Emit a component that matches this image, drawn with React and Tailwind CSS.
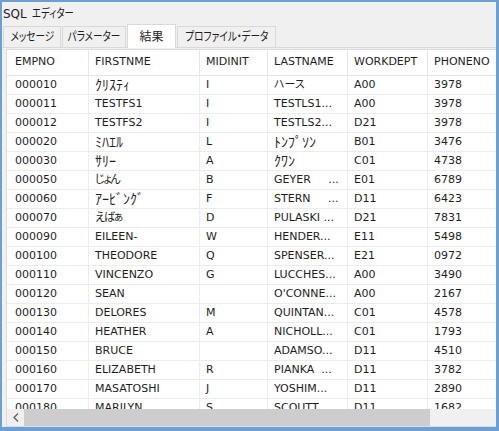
const rows = [
  ['000010', 'ｸﾘｽﾃｨ', 'I', 'ハース', 'A00', '3978'],
  ['000011', 'TESTFS1', 'I', 'TESTLS1...', 'A00', '3978'],
  ['000012', 'TESTFS2', 'I', 'TESTLS2...', 'D21', '3978'],
  ['000020', 'ﾐﾊｴﾙ', 'L', 'ﾄﾝﾌﾟｿﾝ', 'B01', '3476'],
  ['000030', 'ｻﾘｰ', 'A', 'ｸﾜﾝ', 'C01', '4738'],
  ['000050', 'じょん', 'B', 'GEYER\u00a0\u00a0\u00a0\u00a0 ...', 'E01', '6789'],
  ['000060', 'ｱｰﾋﾞﾝｸﾞ', 'F', 'STERN\u00a0\u00a0\u00a0\u00a0 ...', 'D11', '6423'],
  ['000070', 'えばぁ', 'D', 'PULASKI ...', 'D21', '7831'],
  ['000090', 'EILEEN-', 'W', 'HENDER...', 'E11', '5498'],
  ['000100', 'THEODORE', 'Q', 'SPENSER...', 'E21', '0972'],
  ['000110', 'VINCENZO', 'G', 'LUCCHES...', 'A00', '3490'],
  ['000120', 'SEAN', '', "O'CONNE...", 'A00', '2167'],
  ['000130', 'DELORES', 'M', 'QUINTAN...', 'C01', '4578'],
  ['000140', 'HEATHER', 'A', 'NICHOLL...', 'C01', '1793'],
  ['000150', 'BRUCE', '', 'ADAMSO...', 'D11', '4510'],
  ['000160', 'ELIZABETH', 'R', 'PIANKA\u00a0 ...', 'D11', '3782'],
  ['000170', 'MASATOSHI', 'J', 'YOSHIM...', 'D11', '2890'],
  ['000180', 'MARILYN', 'S', 'SCOUTT\u00a0 ...', 'D11', '1682'],
];

const headers = ['EMPNO', 'FIRSTNME', 'MIDINIT', 'LASTNAME', 'WORKDEPT', 'PHONENO'];
const cols = 'grid grid-cols-[82px_111px_68px_80px_80px_80px]';

// half-width katakana reads too small at the table size
const isKana = (s) => /[\uff61-\uff9f]/.test(s);
const isHira = (s) => /[\u3040-\u309f]/.test(s);

function Tab({ label, active, w }) {
  if (active) {
    return (
      <div className={`relative z-10 -mb-px flex h-[24px] items-center justify-center self-end border border-b-0 border-[#d9d9d9] bg-white text-[12px] ${w}`}>
        {label}
      </div>
    );
  }
  return (
    <div className={`flex h-[21px] items-center justify-center self-end overflow-hidden whitespace-nowrap border border-b-0 border-[#d9d9d9] bg-[#f0f0f0] text-[12px] ${w}`}>
      <span className="inline-block scale-x-[0.8]">{label}</span>
    </div>
  );
}

export default function App() {
  return (
    <div
      className="flex h-[431px] w-[499px] flex-col overflow-hidden border-t-2 border-r-[3px] border-b-[4px] border-l-2 border-[#6c9fd6] bg-[#f0f0f0] text-[#1e1e1e] [font-feature-settings:'palt']"
      style={{ fontFamily: '"DejaVu Sans", "Noto Sans CJK JP", sans-serif' }}
    >
      <div className="flex h-[23px] items-center pl-[1px] text-[12px]">
        SQL
        <span className="ml-[5px] inline-block origin-left scale-x-[0.78]">エディター</span>
      </div>

      <div className="flex h-[23px] items-end gap-[1px] border-b border-[#d9d9d9] pl-[1px]">
        <Tab label="メッセージ" w="w-[58px]" />
        <Tab label="パラメーター" w="w-[64px]" />
        <Tab label="結果" active w="w-[49px]" />
        <Tab label="プロファイル・データ" w="w-[99px]" />
      </div>

      <div className="mt-[1px] ml-[4px] flex min-h-0 flex-1 flex-col border border-r-0 border-[#dcdcdc] bg-white">
        <div className="min-h-0 flex-1 overflow-hidden text-[11px]">
          <div className={`${cols} h-[26px] items-center border-b border-[#e5e5e5]`}>
            {headers.map((h, i) => (
              <div key={h} className={`flex h-full items-center border-r border-[#e5e5e5] ${i === 0 ? 'pl-[8px]' : 'pl-[6px]'}`}>
                {h}
              </div>
            ))}
          </div>
          {rows.map((r) => (
            <div key={r[0]} className={`${cols} h-[19px] border-b border-[#ececec]`}>
              {r.map((c, i) => (
                <div
                  key={i}
                  className={`flex items-center overflow-hidden whitespace-nowrap border-r border-[#ececec] ${i === 0 ? 'pl-[8px]' : 'pl-[6px]'} ${isKana(c) ? 'text-[14px]' : ''} ${isHira(c) ? 'tracking-[-1px]' : ''}`}
                >
                  {c}
                </div>
              ))}
            </div>
          ))}
        </div>

        <div className="flex h-[17px] shrink-0 bg-[#f0f0f0]">
          <div className="flex w-[17px] items-center justify-center">
            <svg width="6" height="9" viewBox="0 0 6 9">
              <path d="M5 0.5 L1 4.5 L5 8.5" fill="none" stroke="#606060" strokeWidth="1.3" />
            </svg>
          </div>
          <div className="w-[406px] bg-[#cdcdcd]" />
          <div className="flex-1" />
        </div>
      </div>
    </div>
  );
}
